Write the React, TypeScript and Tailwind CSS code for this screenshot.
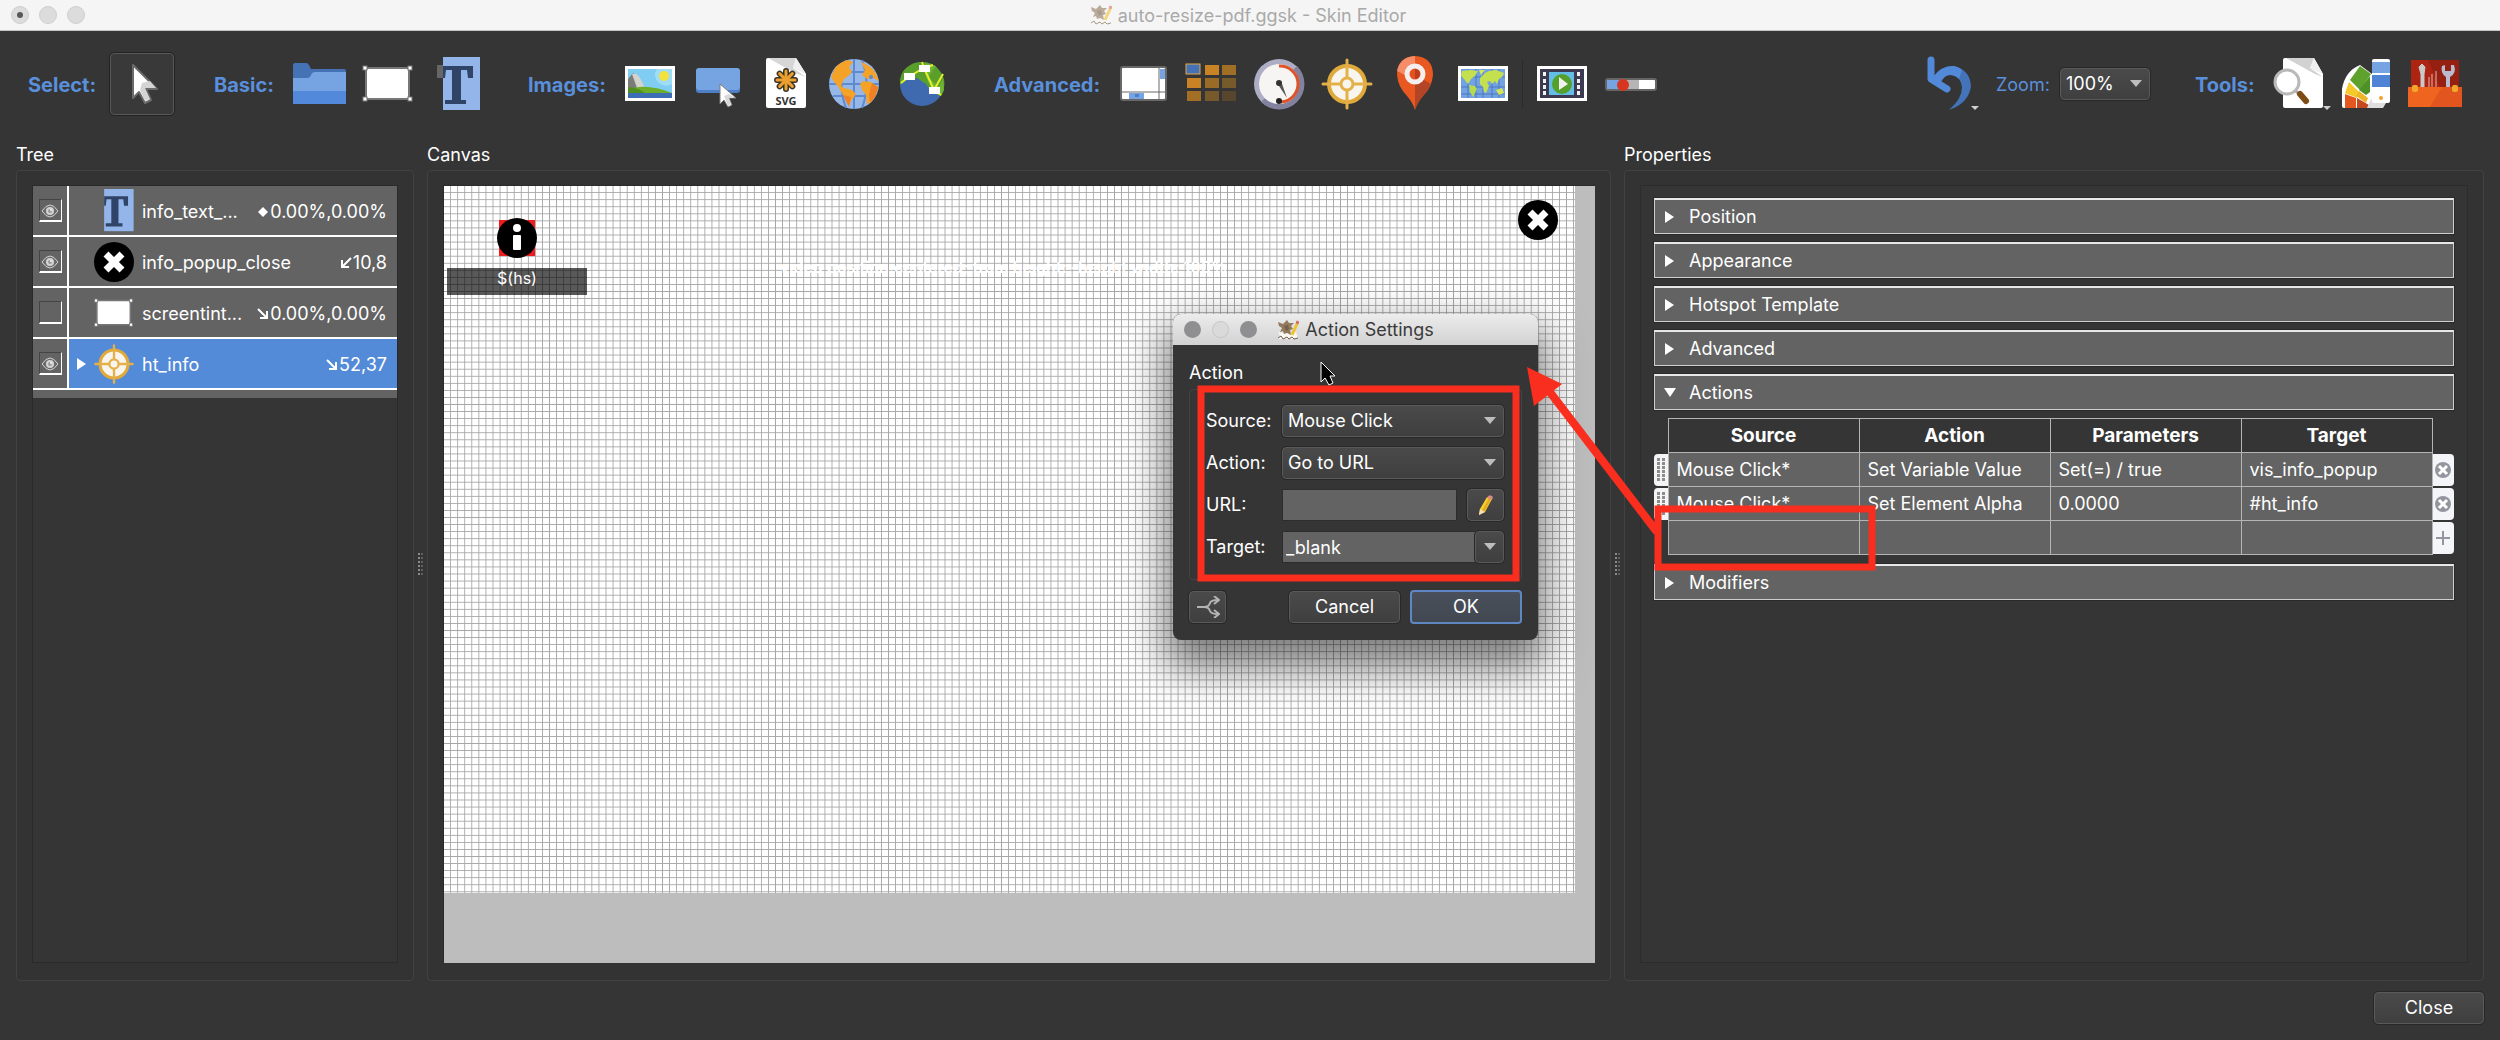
import React from "react";

type IconProps = { className?: string };

/* ---------- toolbar icons, drawn on a 54 x 54 field ---------- */

function Icon({ children, className = "size-[54px]" }: { children: React.ReactNode; className?: string }) {
  return (
    <svg viewBox="0 0 54 54" className={`shrink-0 overflow-visible ${className}`} aria-hidden="true">
      {children}
    </svg>
  );
}

function CursorIcon() {
  return (
    <Icon>
      <path d="M18 8 V41 L24 35 L30 46 L36 43 L31 32 H42 Z" fill="#fff" stroke="#6b6b6b" strokeWidth="2" strokeLinejoin="round" />
      <path d="M27 26 L35 24 L41 31 H30 L35 42 L30 44 L25 33 Z" fill="#d4d4d4" />
    </Icon>
  );
}

function FolderIcon() {
  return (
    <Icon>
      <path d="M0 8 Q0 6 2 6 H13 Q15 6 16 8 L18 12 H51 Q53 12 53 14 V46 H0 Z" fill="#4472b4" />
      <path d="M0 21 H14 Q17 21 18 18 Q19 15 22 15 H53 V34 H0 Z" fill="#76a3e2" />
      <path d="M0 34 H53 V47 H0 Z" fill="#5289db" />
    </Icon>
  );
}

function RectangleIcon({ className }: IconProps) {
  return (
    <Icon className={className}>
      <rect x="5" y="11" width="43" height="31" rx="2" fill="#fff" stroke="#777" strokeWidth="2" />
      {[4, 49].map((x) =>
        [11, 42].map((y) => <rect key={`${x}-${y}`} x={x - 2} y={y - 2} width="4" height="4" fill="#fff" stroke="#777" strokeWidth="1" />)
      )}
    </Icon>
  );
}

function LetterIcon({ handle = true, className }: IconProps & { handle?: boolean }) {
  return (
    <Icon className={className}>
      <rect x="14" y="0" width="37" height="53" fill="#94b5ea" />
      {handle && <rect x="8" y="8" width="6" height="13" fill="#666" />}
      <path d="M14 9 H44 V21 H39 L38 13 H32 V43 H37 V47 H16 V43 H23 V13 H17 L16 21 H14 Z" fill="#2f4467" />
    </Icon>
  );
}

function PictureIcon() {
  return (
    <Icon>
      <rect x="2" y="9" width="50" height="35" fill="#fff" />
      <rect x="5" y="12" width="44" height="29" fill="#7fcdf3" />
      <path d="M34 12 H49 V27 Q42 31 36 26 Q29 19 34 12 Z" fill="#9fdcf6" />
      <circle cx="41" cy="19" r="5" fill="#f4e23c" />
      <path d="M5 35 V22 L10 16 Q15 17 20 29 L24 35 Z" fill="#7b7b78" />
      <path d="M9 17 Q15 14 20 27 L23 33 L14 31 Z" fill="#d3d3cd" />
      <path d="M5 33 Q22 25 49 36 H5 Z" fill="#6dae2a" />
      <path d="M5 30 Q16 31 22 36 H5 Z" fill="#4f8f22" />
      <rect x="5" y="36" width="44" height="5" fill="#3d6db5" />
    </Icon>
  );
}

function ButtonIcon() {
  return (
    <Icon>
      <rect x="5" y="12" width="44" height="24" rx="3" fill="#4f7fc6" />
      <rect x="5" y="11" width="44" height="22" rx="3" fill="#76a3e2" />
      <path d="M29 27 V47 L33 43 L37 50 L41 48 L38 41 H45 Z" fill="#fff" stroke="#7c7c7c" strokeWidth="1" strokeLinejoin="round" />
      <path d="M33 39 L38 37 L43 41 H38 L40 47 L37 49 Z" fill="#d8d8d8" />
    </Icon>
  );
}

function SvgFileIcon() {
  return (
    <Icon>
      <path d="M7 3 Q7 1 9 1 H37 L47 17 V49 Q47 51 45 51 H9 Q7 51 7 49 Z" fill="#fff" />
      <path d="M9 1 H37 L34 11 L47 20 L36 16 Z" fill="#d6d6d6" />
      <path d="M37 1 L47 17 L34 11 Z" fill="#efefef" />
      {[0, 45, 90, 135].map((a) => (
        <g key={a} transform={`rotate(${a} 27 23)`}>
          <line x1="27" y1="14" x2="27" y2="32" stroke="#3a3326" strokeWidth="6" strokeLinecap="round" />
        </g>
      ))}
      {[0, 45, 90, 135].map((a) => (
        <g key={a} transform={`rotate(${a} 27 23)`}>
          <line x1="27" y1="14" x2="27" y2="32" stroke="#eba02f" strokeWidth="3" strokeLinecap="round" />
        </g>
      ))}
      <text x="27" y="48" textAnchor="middle" fontFamily="Open Sans, sans-serif" fontWeight="700" fontSize="11" fill="#333">SVG</text>
    </Icon>
  );
}

function GlobeIcon() {
  return (
    <Icon>
      <circle cx="27" cy="27" r="25" fill="#95b8e9" />
      <path d="M27 2 V52 M2 27 H52 M6 15 H48 M6 39 H48 M19 3 Q10 27 19 51 M35 3 Q44 27 35 51" stroke="#5f8ad0" strokeWidth="2" fill="none" />
      <path d="M8 11 Q13 5 21 3 L26 5 L22 10 L25 15 L20 20 L17 22 L14 29 L17 31 L25 33 L29 37 L24 44 L22 49 L16 38 L12 31 L8 26 L4 20 Z" fill="#f5a228" />
      <path d="M34 5 Q43 8 48 15 L52 24 L46 21 L40 22 L35 18 L38 13 Z" fill="#f5a228" />
      <path d="M36 24 L44 25 L51 30 Q50 39 43 46 L40 47 L39 38 L35 33 L33 27 Z" fill="#f5a228" />
      <path d="M45 26 L51 30 Q50 39 43 46 L42 37 Z M16 38 L24 40 L22 50 Z" fill="#f08124" />
      <circle cx="44" cy="20" r="2" fill="#5f8ad0" />
    </Icon>
  );
}

function NetworkGlobeIcon() {
  return (
    <Icon>
      <circle cx="27" cy="27" r="22" fill="#3f6ab0" />
      <path d="M5 28 Q4 17 11 11 Q19 4 27 5 Q38 5 44 13 Q51 21 49 31 Q48 36 46 39 L36 35 L31 27 L22 21 L12 22 Z" fill="#5a9f29" />
      <path d="M30 6 L41 9 L33 20 L44 30 L48 22 L49 33 L46 39 L37 34 L30 17 Z" fill="#6fb432" />
      <path d="M6 26 L15 19 L29 11 L39 33 L48 17 M29 11 L27 5 M29 11 L38 8 M39 33 L46 38" stroke="#e4ee2d" strokeWidth="2" fill="none" />
      <rect x="9" y="16" width="11" height="7" fill="#fff" />
      <rect x="24" y="8" width="11" height="7" fill="#fff" />
      <rect x="34" y="30" width="11" height="7" fill="#fff" />
    </Icon>
  );
}

function ScrollAreaIcon() {
  return (
    <Icon>
      <rect x="5" y="10" width="45" height="33" rx="2" fill="#fff" stroke="#686868" strokeWidth="2" />
      <path d="M43 10 V43 M5 35 H50" stroke="#686868" strokeWidth="1" />
      <rect x="44" y="12" width="5" height="10" fill="#76a3e2" />
      <rect x="13" y="36" width="15" height="6" fill="#76a3e2" />
      <rect x="19" y="37" width="4" height="3" fill="#4f7fc6" />
    </Icon>
  );
}

const clonerCells = [
  [21, 8, "#c98324"],
  [38, 8, "#a06e24"],
  [3, 21, "#c98324"],
  [21, 21, "#9a6b26"],
  [38, 21, "#765a2c"],
  [3, 34, "#a36f24"],
  [21, 34, "#775a2c"],
  [38, 34, "#57462d"],
] as const;

function ClonerIcon() {
  return (
    <Icon>
      {clonerCells.map(([x, y, c]) => (
        <rect key={`${x}-${y}`} x={x} y={y} width="14" height="10" fill={c} />
      ))}
      <rect x="2" y="7" width="14" height="10" fill="#4472b4" stroke="#e2a64a" strokeWidth="1" />
    </Icon>
  );
}

function GaugeIcon() {
  return (
    <Icon>
      <circle cx="27" cy="27" r="25" fill="#adadc4" />
      <path d="M45 9 A25 25 0 0 1 9 45 Z" fill="#82829f" />
      <circle cx="27" cy="27" r="20" fill="#f6f5f3" />
      <path d="M27 9 A18 18 0 0 1 29 45" fill="none" stroke="#df532a" strokeWidth="3" />
      <path d="M25 26 L29 24 L35 41 Z" fill="#555" />
      <circle cx="27" cy="26" r="3" fill="#333" />
      <circle cx="27" cy="44" r="3" fill="#222" />
    </Icon>
  );
}

function HotspotIcon({ className }: IconProps) {
  return (
    <Icon className={className}>
      <circle cx="27" cy="27" r="18" fill="#f8f5ee" stroke="#e0aa3a" strokeWidth="4" />
      <path d="M27 3 V51 M3 27 H51" stroke="#e4b04a" strokeWidth="3" strokeLinecap="round" />
      <circle cx="27" cy="27" r="6" fill="#f8f5ee" stroke="#e4b04a" strokeWidth="3" />
    </Icon>
  );
}

function PinIcon() {
  return (
    <Icon>
      <path d="M27 -1 Q45 0 45 18 Q44 30 35 39 Q29 46 27 53 Q25 46 19 39 Q10 30 9 18 Q9 0 27 -1 Z" fill="#e85820" />
      <path d="M27 -1 Q12 0 9 14 L17 18 L27 7 Z" fill="#f48d68" />
      <path d="M27 27 L36 23 L43 27 Q40 34 35 39 Q29 46 27 53 Z" fill="#b34526" />
      <circle cx="27" cy="17" r="8" fill="#e3521f" stroke="#f4eeee" strokeWidth="5" />
      <path d="M27 12 A5 5 0 0 1 27 22 Z" fill="#bb3f1b" />
    </Icon>
  );
}

function MapIcon() {
  return (
    <Icon>
      <rect x="2" y="9" width="50" height="35" fill="#fff" />
      <rect x="5" y="12" width="44" height="29" fill="#72a2e1" />
      <path d="M5 20 H49 M5 30 H49 M5 37 H49 M12 12 V41 M20 12 V41 M27 12 V41 M36 12 V41 M43 12 V41" stroke="#4b78c0" strokeWidth="1" />
      <path d="M6 14 L14 13 L22 14 L19 19 L15 22 L12 27 L8 22 L5 19 Z" fill="#c5e04f" />
      <path d="M13 28 L19 29 L21 32 L17 40 L14 35 Z" fill="#b5dc4c" />
      <path d="M23 13 L29 13 L25 18 Z" fill="#d6e860" />
      <path d="M24 21 L29 16 L33 14 L40 13 L48 16 L46 20 L43 22 L41 27 L39 24 L36 27 L34 24 L31 25 L33 29 L30 36 L28 35 L27 30 L24 27 Z" fill="#c5e04f" />
      <path d="M40 33 L46 31 L48 36 L43 38 Z" fill="#d2e655" />
    </Icon>
  );
}

function VideoIcon() {
  return (
    <Icon>
      <rect x="2" y="9" width="50" height="35" fill="#fff" />
      <rect x="5" y="12" width="44" height="29" fill="#3c3951" />
      {[15, 22, 28, 34].map((y) => (
        <g key={y} fill="#f2f2f2">
          <rect x="8" y={y} width="3" height="4" />
          <rect x="42" y={y} width="3" height="4" />
        </g>
      ))}
      <rect x="14" y="15" width="25" height="23" fill="#63bde6" />
      <circle cx="27" cy="27" r="10" fill="#54a02a" />
      <path d="M24 20 L33 27 L24 33 Z" fill="#f1f1f1" />
    </Icon>
  );
}

function SliderIcon() {
  return (
    <Icon>
      <rect x="3" y="22" width="50" height="11" rx="2" fill="#fff" stroke="#666" strokeWidth="2" />
      <rect x="4" y="23" width="16" height="9" fill="#76a3e2" />
      <rect x="20" y="23" width="16" height="9" fill="#b5b5b5" />
      <circle cx="20" cy="28" r="6" fill="#d6361f" />
    </Icon>
  );
}

function SmallArrow({ x, y }: { x: number; y: number }) {
  return <path d={`M${x} ${y} h8 l-4 4 Z`} fill="#d0d0d0" />;
}

function UndoIcon() {
  return (
    <Icon>
      <path d="M8 20 Q17 8 29 9 Q45 13 46 29 Q44 46 24 53 Q37 42 37 30 Q35 18 25 18 Q17 18 12 27 Z" fill="#4373b8" />
      <path d="M8 20 Q17 8 29 9 Q34 10 37 13 L34 22 Q30 18 25 18 Q19 18 15 27 Z" fill="#5289d8" />
      <path d="M6 3 V22 L22 32" fill="none" stroke="#5289d8" strokeWidth="7" strokeLinecap="round" strokeLinejoin="round" />
      <SmallArrow x={46} y={49} />
    </Icon>
  );
}

function FindIcon() {
  return (
    <Icon>
      <path d="M11 3 Q11 1 13 1 H42 L51 17 V49 Q51 51 49 51 H13 Q11 51 11 49 Z" fill="#fff" />
      <path d="M14 1 H42 L38 11 L51 20 L43 17 Z" fill="#d2d2d2" />
      <path d="M42 1 L51 17 L38 11 Z" fill="#f0f0f0" />
      <circle cx="15" cy="25" r="12" fill="#fff" stroke="#b9b9b9" strokeWidth="3" />
      <path d="M24 34 L28 38" stroke="#aaa" strokeWidth="3" />
      <path d="M28 37 L34 44" stroke="#7d4b13" strokeWidth="6" strokeLinecap="round" />
      <SmallArrow x={51} y={49} />
    </Icon>
  );
}

function SwatchIcon() {
  return (
    <Icon>
      <path d="M2 50 V32 Q5 14 20 8 L32 17 V51 H4 Q2 51 2 49 Z" fill="#fff" />
      <path d="M20 9 L31 17 L20 33 L10 23 Z" fill="#5ea12c" />
      <path d="M30 19 V35 L26 38 L19 33 Z" fill="#4d9227" />
      <path d="M9 25 L19 35 L17 41 L5 36 Z" fill="#f6c829" />
      <path d="M19 34 L28 41 L26 46 L16 39 Z" fill="#eeb52a" />
      <path d="M5 37 L16 41 V51 H5 Z" fill="#e6561f" />
      <path d="M17 41 L29 48 V51 H17 Z" fill="#c64a20" />
      <path d="M31 42 L46 46 L43 51 H27 Z" fill="#dedede" />
      <rect x="32" y="2" width="18" height="44" rx="2" fill="#fff" />
      <rect x="32" y="5" width="18" height="11" fill="#76a3e2" />
      <rect x="32" y="18" width="18" height="12" fill="#4f83d6" />
      <circle cx="41" cy="41" r="2" fill="#eba52a" />
    </Icon>
  );
}

function ToolboxIcon() {
  return (
    <Icon>
      <rect x="3" y="3" width="48" height="32" fill="#ad2512" />
      <path d="M20 3 H51 V30 H32 Z" fill="#951f10" />
      <path d="M11 10 L14 7 L17 10 L16 17 V32 H13 V17 Z" fill="#c9c9c9" stroke="#c9c9c9" strokeWidth="1" />
      <path d="M21 20 V32 M24 17 V32 M28 14 V32" stroke="#e0b8ae" strokeWidth="1" />
      <path d="M34 9 Q32 16 38 20 V32 H42 V20 Q49 16 46 8 L43 8 V14 H37 V8 Z" fill="#b9bacd" />
      <path d="M0 30 H54 V50 H0 Z" fill="#ef641f" />
      <path d="M34 30 H54 V50 H22 Z" fill="#e2551f" />
      <rect x="4" y="28" width="6" height="7" rx="2" fill="#f2a62a" />
      <rect x="44" y="28" width="6" height="7" rx="2" fill="#f2a62a" />
    </Icon>
  );
}

function AppIcon({ className = "" }: IconProps) {
  return (
    <svg viewBox="0 0 22 20" className={`h-5 w-[22px] shrink-0 ${className}`} aria-hidden="true">
      <path d="M1 12 L5 13 L9 11 L14 13 L19 12 L21 19 H1 L3 16 Z" fill="#fbf8f1" />
      <path d="M1 18 L4 16 L6 19 L10 17 L12 19 L15 17 L17 19 L21 18" fill="none" stroke="#6d5b48" strokeWidth="1" />
      <path d="M1 2 L6 4 L8 2 L10 0 L12 3 L17 3 L14 6 L16 9 L13 10 L14 15 L10 13 L7 14 L6 11 L3 12 L5 8 L2 6 Z" fill="#937a5e" />
      <path d="M7 6 L11 5 L12 9 L9 11 Z" fill="#75604a" />
      <path d="M20 4 L15 15" stroke="#f0c22e" strokeWidth="3" />
      <path d="M21 1 L20 4" stroke="#d9705c" strokeWidth="3" />
    </svg>
  );
}

function CrossBadge({ className = "size-10" }: IconProps) {
  return (
    <svg viewBox="0 0 40 40" className={className} aria-hidden="true">
      <circle cx="20" cy="20" r="20" fill="#000" />
      <path d="M12 12 L28 28 M28 12 L12 28" stroke="#fff" strokeWidth="7" />
    </svg>
  );
}

function EyeIcon() {
  return (
    <svg viewBox="0 0 18 14" className="h-[14px] w-[18px]" aria-hidden="true">
      <path d="M1 7 Q5 1 9 1 Q13 1 17 7 Q13 13 9 13 Q5 13 1 7 Z" fill="#6a6a6a" stroke="#d4d4d4" strokeWidth="1" />
      <circle cx="9" cy="7" r="4" fill="#d4d4d4" />
      <circle cx="9" cy="7" r="2" fill="#9a9a9a" />
      <circle cx="10" cy="6" r="1" fill="#f5f5f5" />
    </svg>
  );
}

function PencilIcon() {
  return (
    <svg viewBox="0 0 16 22" className="h-[22px] w-4" aria-hidden="true">
      <path d="M9 3 L14 5 L7 18 L1 21 L2 15 Z" fill="#f6cd2c" />
      <path d="M11 4 L13 5 L6 18 L4 17 Z" fill="#e0a91f" />
      <path d="M2 15 L7 18 L1 21 Z" fill="#f3dfba" />
      <path d="M9 4 Q11 -1 15 3 L14 6 Z" fill="#d98a84" />
    </svg>
  );
}

function BranchIcon() {
  return (
    <svg viewBox="0 0 24 22" className="h-[22px] w-6" fill="none" stroke="#b4b4b4" strokeWidth="2" aria-hidden="true">
      <path d="M1 11 H8 Q13 11 14 7 Q15 4 22 4 M8 11 Q13 11 14 15 Q15 18 22 18" />
      <path d="M18 0 L23 4 L18 8 M18 14 L23 18 L18 22" />
    </svg>
  );
}

function DownTriangle() {
  return (
    <svg viewBox="0 0 12 8" className="h-2 w-3" aria-hidden="true">
      <path d="M0 0 H12 L6 7 Z" fill="#bdbdbd" />
    </svg>
  );
}

function Disclosure({ open = false }: { open?: boolean }) {
  return (
    <svg viewBox="0 0 12 12" className="size-3 shrink-0" aria-hidden="true">
      <path d={open ? "M0 1 H12 L6 10 Z" : "M1 0 L10 6 L1 12 Z"} fill="#fff" />
    </svg>
  );
}

/* ---------- toolbar ---------- */

function ToolButton({ label, active, children }: { label: string; active?: boolean; children: React.ReactNode }) {
  return (
    <button
      type="button"
      aria-label={label}
      aria-pressed={active}
      className={
        active
          ? "flex h-[62px] w-16 items-center justify-center rounded border border-[#585858] bg-[#393939] outline outline-[#232323]"
          : "flex h-[62px] w-16 items-center justify-center"
      }
    >
      {children}
    </button>
  );
}

const groupLabel = "shrink-0 pt-px text-[20px] font-bold text-[#5a8fdb]";

function Toolbar() {
  return (
    <div role="toolbar" aria-label="Skin tools" className="flex items-center gap-10 pt-[22px] pr-[33px] pb-[23px] pl-7">
      <div className="flex items-center">
        <span className={`${groupLabel} w-[82px]`}>Select:</span>
        <ToolButton label="Select" active><CursorIcon /></ToolButton>
      </div>
      <div className="flex items-center">
        <span className={`${groupLabel} w-[74px]`}>Basic:</span>
        <div className="flex gap-1">
          <ToolButton label="Container"><FolderIcon /></ToolButton>
          <ToolButton label="Rectangle"><RectangleIcon /></ToolButton>
          <ToolButton label="Text"><LetterIcon /></ToolButton>
        </div>
      </div>
      <div className="flex items-center">
        <span className={`${groupLabel} w-[90px]`}>Images:</span>
        <div className="flex gap-1">
          <ToolButton label="Image"><PictureIcon /></ToolButton>
          <ToolButton label="Button"><ButtonIcon /></ToolButton>
          <ToolButton label="SVG file"><SvgFileIcon /></ToolButton>
          <ToolButton label="External image"><GlobeIcon /></ToolButton>
          <ToolButton label="Web element"><NetworkGlobeIcon /></ToolButton>
        </div>
      </div>
      <div className="flex items-center">
        <span className={`${groupLabel} w-[117px]`}>Advanced:</span>
        <div className="flex gap-1">
          <ToolButton label="Scroll area"><ScrollAreaIcon /></ToolButton>
          <ToolButton label="Cloner"><ClonerIcon /></ToolButton>
          <ToolButton label="Timer"><GaugeIcon /></ToolButton>
          <ToolButton label="Hotspot template"><HotspotIcon /></ToolButton>
          <ToolButton label="Marker"><PinIcon /></ToolButton>
          <ToolButton label="Map"><MapIcon /></ToolButton>
        </div>
        <div className="mx-[7px] h-12 w-px bg-[#2b2b2b]" />
        <div className="flex gap-1">
          <ToolButton label="Video"><VideoIcon /></ToolButton>
          <ToolButton label="Seekbar"><SliderIcon /></ToolButton>
        </div>
      </div>
      <div className="ml-auto flex items-center">
        <ToolButton label="Undo"><UndoIcon /></ToolButton>
        <label htmlFor="zoom" className="ml-3 w-16 pt-px text-[#5a8fdb]">Zoom:</label>
        <Dropdown id="zoom" value="100%" className="h-8 w-[90px]" />
        <span className={`${groupLabel} ml-[45px] w-[72px]`}>Tools:</span>
        <div className="flex gap-1">
          <ToolButton label="Find"><FindIcon /></ToolButton>
          <ToolButton label="Colors"><SwatchIcon /></ToolButton>
          <ToolButton label="Toolbox"><ToolboxIcon /></ToolButton>
        </div>
      </div>
    </div>
  );
}

const raised = "rounded-sm border border-[#5a5a5a] bg-linear-to-b from-[#4a4a4a] to-[#3f3f3f] outline outline-[#282828]";

function Dropdown({ id, value, className }: { id: string; value: string; className: string }) {
  return (
    <div className={`relative min-w-0 ${className}`}>
      <select id={id} defaultValue={value} className={`size-full appearance-none pl-[5px] ${raised}`}>
        <option>{value}</option>
      </select>
      <span className="pointer-events-none absolute inset-y-0 right-2 flex items-center">
        <DownTriangle />
      </span>
    </div>
  );
}

/* ---------- panels ---------- */

function Panel({ title, children }: { title: string; children: React.ReactNode }) {
  return (
    <section className="flex min-w-0 flex-col">
      <h2 className="flex h-8 items-center pt-px">{title}</h2>
      <div className="flex flex-1 flex-col rounded-sm border border-[#424242] bg-[#333] px-[15px] pt-[14px] pb-[17px]">{children}</div>
    </section>
  );
}

function Splitter() {
  return (
    <div role="separator" className="flex flex-col items-center justify-center gap-[2px] pt-2">
      {[0, 1, 2, 3, 4, 5].map((i) => (
        <span key={i} className="flex gap-px">
          <span className="size-[2px] bg-[#8a8a8a]" />
          <span className="size-[2px] bg-[#5f5f5f]" />
        </span>
      ))}
    </div>
  );
}

type Anchor = "center" | "left" | "right";
type TreeItem = { name: string; pos: string; anchor: Anchor; visible: boolean; icon: React.ReactNode; selected?: boolean };

const treeItems: TreeItem[] = [
  { name: "info_text_...", pos: "0.00%,0.00%", anchor: "center", visible: true, icon: <LetterIcon handle={false} className="size-[43px]" /> },
  { name: "info_popup_close", pos: "10,8", anchor: "left", visible: true, icon: <CrossBadge /> },
  { name: "screentint...", pos: "0.00%,0.00%", anchor: "right", visible: false, icon: <RectangleIcon className="size-[42px]" /> },
  { name: "ht_info", pos: "52,37", anchor: "right", visible: true, selected: true, icon: <HotspotIcon className="size-[42px]" /> },
];

function AnchorMark({ anchor }: { anchor: Anchor }) {
  const paths: Record<Anchor, React.ReactNode> = {
    center: <path d="M6 1 L11 6 L6 11 L1 6 Z" fill="#fff" />,
    left: <path d="M11 1 L2 10 M2 3 V10 H9" stroke="#fff" strokeWidth="2" fill="none" />,
    right: <path d="M1 1 L10 10 M3 10 H10 V3" stroke="#fff" strokeWidth="2" fill="none" />,
  };
  return <svg viewBox="0 0 12 12" className="size-3" aria-hidden="true">{paths[anchor]}</svg>;
}

function Tree() {
  return (
    <div className="flex-1 border border-[#2a2a2a] bg-[#353535]">
      <ul className="bg-[#636363] pb-2">
        {treeItems.map((item) => (
          <li key={item.name} className="flex h-[51px] border-b-2 border-white">
            <label className="relative flex w-[34px] items-center justify-center">
              <input
                type="checkbox"
                defaultChecked={item.visible}
                aria-label={`Show ${item.name}`}
                className="size-[23px] appearance-none border border-t-[#444] border-r-white border-b-2 border-b-white border-l-[#444]"
              />
              {item.visible && <span className="pointer-events-none absolute"><EyeIcon /></span>}
            </label>
            <div className={`flex min-w-0 flex-1 items-center border-l-2 border-white pr-[10px] ${item.selected ? "bg-[#538bd9]" : ""}`}>
              <span className="flex w-[25px] justify-center">{item.selected && <Disclosure />}</span>
              <span className="mr-2 flex w-10 shrink-0 items-center justify-center">{item.icon}</span>
              <span className="truncate pt-0.5">{item.name}</span>
              <span className="ml-auto flex items-center gap-px pt-0.5">
                <AnchorMark anchor={item.anchor} />
                {item.pos}
              </span>
            </div>
          </li>
        ))}
      </ul>
    </div>
  );
}

function Canvas() {
  return (
    <div className="flex-1 border-t border-l border-[#2a2a2a] bg-[#bdbdbd]">
      <div className="relative h-[707px] w-[1131px] max-w-full overflow-hidden bg-white bg-[linear-gradient(to_left,#a6a6a6_1px,transparent_1px),linear-gradient(to_top,#a6a6a6_1px,transparent_1px)] bg-[length:calc(100%/160)_calc(100%/100)]">
        <div className="absolute top-[34px] left-[55px] size-9 bg-[#ee1c1c]" />
        <svg viewBox="0 0 40 40" className="absolute top-8 left-[53px] size-10" role="img" aria-label="Info">
          <circle cx="20" cy="20" r="20" fill="#000" />
          <circle cx="20" cy="10" r="4" fill="#fff" />
          <rect x="16" y="17" width="8" height="15" rx="1" fill="#fff" />
        </svg>
        <div className="absolute top-[82px] left-[3px] flex h-[27px] w-[140px] justify-center bg-black/65 text-[16px] leading-[20px]">$(hs)</div>
        <CrossBadge className="absolute top-[14px] left-[1074px] size-10" />
        <div className="absolute top-[71px] left-[336px] text-[16px] leading-5 font-semibold whitespace-nowrap text-white">
          video position:centered; from height: -height width: 100%
        </div>
      </div>
    </div>
  );
}

/* ---------- properties ---------- */

function Section({ title, open }: { title: string; open?: boolean }) {
  return (
    <button
      type="button"
      aria-expanded={!!open}
      className="flex h-9 w-full items-center gap-[13px] border border-t-2 border-[#cfcfcf] border-t-[#e8e8e8] bg-[#636363] pl-[9px] text-left outline outline-[#2a2a2a]"
    >
      <Disclosure open={open} />
      {title}
    </button>
  );
}

const actionRows = [
  ["Mouse Click*", "Set Variable Value", "Set(=) / true", "vis_info_popup"],
  ["Mouse Click*", "Set Element Alpha", "0.0000", "#ht_info"],
];

const cell = "h-[34px] border border-[#b5b5b5]";

function Handle() {
  return (
    <button type="button" aria-label="Move action" className="flex h-8 w-[14px] items-center justify-center rounded-l bg-[#f4f4f6]">
      <svg viewBox="0 0 8 24" className="h-6 w-2" fill="#8c8c8c" aria-hidden="true">
        {[0, 4, 8, 12, 16, 20].map((y) => (
          <g key={y}>
            <rect x="0" y={y} width="3" height="3" />
            <rect x="5" y={y} width="3" height="3" />
          </g>
        ))}
      </svg>
    </button>
  );
}

function EndButton({ kind }: { kind: "remove" | "add" }) {
  return (
    <button
      type="button"
      aria-label={kind === "remove" ? "Remove action" : "Add action"}
      className="flex h-8 w-[21px] items-center justify-center rounded-r bg-[#f4f5f9]"
    >
      <svg viewBox="0 0 16 16" className="size-4" aria-hidden="true">
        {kind === "remove" ? (
          <>
            <circle cx="8" cy="8" r="8" fill="#94969f" />
            <path d="M4 4 L12 12 M12 4 L4 12" stroke="#fff" strokeWidth="3" />
          </>
        ) : (
          <path d="M8 1 V15 M1 8 H15" stroke="#94969f" strokeWidth="2" />
        )}
      </svg>
    </button>
  );
}

function ActionsTable() {
  return (
    <table className="mb-px w-full table-fixed border-collapse">
      <colgroup>
        <col className="w-[14px]" />
        <col />
        <col />
        <col />
        <col />
        <col className="w-[22px]" />
      </colgroup>
      <thead>
        <tr>
          <td />
          {["Source", "Action", "Parameters", "Target"].map((h) => (
            <th key={h} scope="col" className={`${cell} text-[19px] font-bold`}>{h}</th>
          ))}
          <td />
        </tr>
      </thead>
      <tbody>
        {actionRows.map((row, i) => (
          <tr key={i}>
            <td className="p-0"><Handle /></td>
            {row.map((text, c) => (
              <td key={c} className={`${cell} bg-[#636363] px-2`}>{text}</td>
            ))}
            <td className="p-0"><EndButton kind="remove" /></td>
          </tr>
        ))}
        <tr>
          <td />
          {[0, 1, 2, 3].map((c) => (
            <td key={c} className={`${cell} bg-[#636363]`} />
          ))}
          <td className="p-0"><EndButton kind="add" /></td>
        </tr>
      </tbody>
    </table>
  );
}

function Properties() {
  return (
    <div className="flex flex-1 flex-col gap-2 border border-[#2c2c2c] bg-[#353535] px-[13px] py-3">
      <Section title="Position" />
      <Section title="Appearance" />
      <Section title="Hotspot Template" />
      <Section title="Advanced" />
      <Section title="Actions" open />
      <ActionsTable />
      <Section title="Modifiers" />
    </div>
  );
}

/* ---------- floating dialog ---------- */

const field = "border border-[#2d2d2d] bg-[#636363]";

function ActionDialog() {
  return (
    <div
      role="dialog"
      aria-label="Action Settings"
      className="absolute top-[314px] left-[1173px] w-[365px] rounded-lg bg-[#353535] shadow-[0_20px_40px_8px_rgba(0,0,0,0.5)]"
    >
      <div className="relative flex h-[31px] items-center justify-center gap-[6px] rounded-t-lg bg-linear-to-b from-[#ececec] to-[#d2d2d2] text-[#3a3a3a]">
        <div className="absolute left-[11px] flex gap-[11px]">
          <span className="size-[17px] rounded-full bg-[#8f8f91]" />
          <span className="size-[17px] rounded-full border border-[#c6c6c6] bg-[#dadada]" />
          <span className="size-[17px] rounded-full bg-[#8f8f91]" />
        </div>
        <AppIcon />
        <span>Action Settings</span>
      </div>
      <form className="px-4 pt-3 pb-4" onSubmit={(e) => e.preventDefault()}>
        <fieldset className="min-w-0">
          <legend className="h-8 leading-8">Action</legend>
          <div className="grid grid-cols-[76px_minmax(0,1fr)] gap-y-[10px] rounded-sm border border-[#444] pt-[15px] pr-[17px] pb-4 pl-4">
            <label htmlFor="source" className="leading-8">Source:</label>
            <Dropdown id="source" value="Mouse Click" className="h-8" />
            <label htmlFor="action" className="leading-8">Action:</label>
            <Dropdown id="action" value="Go to URL" className="h-8" />
            <label htmlFor="url" className="leading-8">URL:</label>
            <div className="flex gap-[10px]">
              <input id="url" type="text" className={`h-8 min-w-0 flex-1 ${field}`} />
              <button type="button" aria-label="Edit URL" className={`flex h-8 w-[37px] items-center justify-center ${raised}`}>
                <PencilIcon />
              </button>
            </div>
            <label htmlFor="target" className="leading-8">Target:</label>
            <div className="flex">
              <input id="target" type="text" defaultValue="_blank" className={`h-8 min-w-0 flex-1 border-r-0 pl-[3px] ${field}`} />
              <button type="button" aria-label="Show targets" className={`flex h-8 w-[29px] items-center justify-center ${raised}`}>
                <DownTriangle />
              </button>
            </div>
          </div>
        </fieldset>
        <div className="mt-[10px] flex items-center">
          <button type="button" aria-label="Logic block" className={`flex h-8 w-[37px] items-center justify-center ${raised}`}>
            <BranchIcon />
          </button>
          <button type="button" className={`ml-auto h-8 w-[111px] ${raised}`}>Cancel</button>
          <button type="submit" className="ml-[10px] h-[34px] w-[112px] rounded-sm border-2 border-[#5e87c4] bg-linear-to-b from-[#4a505b] to-[#424851]">
            OK
          </button>
        </div>
      </form>
    </div>
  );
}

/* Red highlight frames, the arrow between them and the mouse pointer. */
function Annotations() {
  return (
    <svg viewBox="0 0 2500 1040" width="2500" height="1040" className="pointer-events-none absolute top-0 left-0 max-w-none" aria-hidden="true">
      <g fill="none" stroke="#f92e1e" strokeWidth="7">
        <rect x="1201" y="389" width="315" height="189" />
        <rect x="1658" y="509" width="214" height="58" />
        <path d="M1657 532 L1546 387" strokeWidth="8" />
      </g>
      <path d="M1527 367 L1562 384 L1534 406 Z" fill="#f92e1e" />
      <path d="M1321 362 V382 L1325 378 L1329 385 L1333 383 L1330 376 H1335 Z" fill="#000" stroke="#fff" strokeWidth="1" />
    </svg>
  );
}

export default function App() {
  return (
    <div className="relative flex min-h-screen flex-col overflow-hidden bg-[#353535] font-['Inter',sans-serif] text-[18px] leading-6 text-white">
      <header className="relative flex h-[31px] items-center justify-center gap-[6px] border-b border-[#c4c4c4] bg-[#f5f5f5] pr-1 text-[#a9a9a9]">
        <div className="absolute left-[11px] flex gap-[10px]">
          <span className="flex size-[18px] items-center justify-center rounded-full border border-[#cfcfcf] bg-[#dcdcdc]">
            <span className="size-[6px] rounded-full bg-[#585858]" />
          </span>
          <span className="size-[18px] rounded-full border border-[#cfcfcf] bg-[#dcdcdc]" />
          <span className="size-[18px] rounded-full border border-[#cfcfcf] bg-[#dcdcdc]" />
        </div>
        <AppIcon className="opacity-60" />
        <h1 className="pt-0.5">auto-resize-pdf.ggsk - Skin Editor</h1>
      </header>
      <Toolbar />
      <main className="grid flex-1 grid-cols-[398fr_13px_1184fr_13px_860fr] px-4">
        <Panel title="Tree"><Tree /></Panel>
        <Splitter />
        <Panel title="Canvas"><Canvas /></Panel>
        <Splitter />
        <Panel title="Properties"><Properties /></Panel>
      </main>
      <footer className="flex justify-end px-4 pt-[11px] pb-4">
        <button type="button" className={`h-8 w-[110px] ${raised}`}>Close</button>
      </footer>
      <ActionDialog />
      <Annotations />
    </div>
  );
}
